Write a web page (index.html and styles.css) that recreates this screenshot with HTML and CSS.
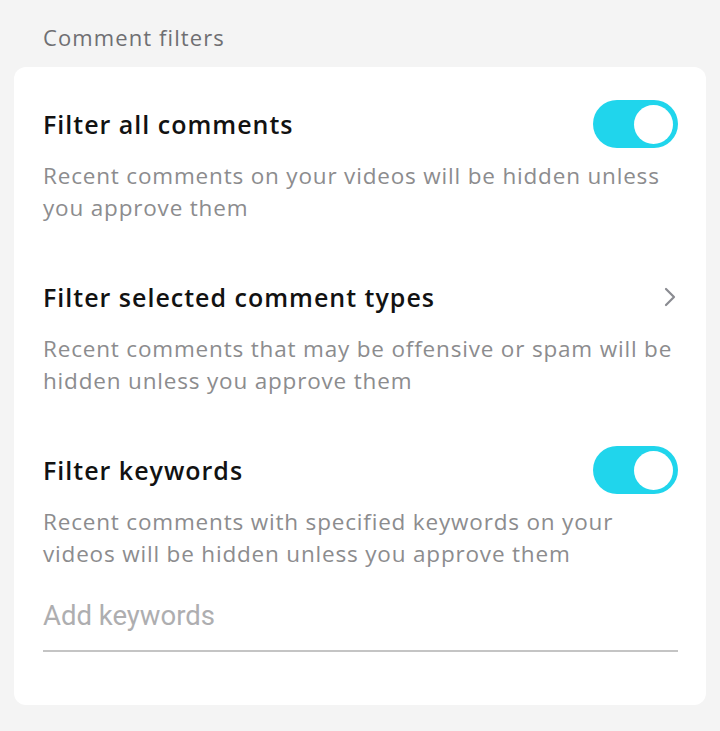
FILE: index.html
```html
<!DOCTYPE html>
<html lang="en">
<head>
  <meta charset="UTF-8" />
  <meta name="viewport" content="width=device-width, initial-scale=1.0"/>
  <title>Comment filters</title>
  <link rel="stylesheet" href="styles.css">
</head>
<body>

<div class="page">
  <h2 class="section-title">Comment filters</h2>

  <div class="card">
    <!-- Filter all comments -->
    <div class="item">
      <div class="item-row">
        <span class="item-title">Filter all comments</span>
        <span class="toggle on"><span class="knob"></span></span>
      </div>
      <p class="item-desc">Recent comments on your videos will be hidden unless you approve them</p>
    </div>

    <!-- Filter selected comment types -->
    <div class="item">
      <div class="item-row">
        <span class="item-title">Filter selected comment types</span>
        <svg class="chevron" viewBox="0 0 14 20" width="14" height="20">
          <path d="M3 2 L11 10 L3 18" fill="none" stroke="#8a8b91" stroke-width="2.2" stroke-linecap="round" stroke-linejoin="round"/>
        </svg>
      </div>
      <p class="item-desc">Recent comments that may be offensive or spam will be hidden unless you approve them</p>
    </div>

    <!-- Filter keywords -->
    <div class="item">
      <div class="item-row">
        <span class="item-title">Filter keywords</span>
        <span class="toggle on"><span class="knob"></span></span>
      </div>
      <p class="item-desc">Recent comments with specified keywords on your videos will be hidden unless you approve them</p>
      <input class="keyword-input" type="text" placeholder="Add keywords" />
    </div>
  </div>
</div>

</body>
</html>
```

FILE: styles.css
```css
* { margin: 0; padding: 0; box-sizing: border-box; }

html, body {
  height: 100%;
  background: #f4f4f4;
  font-family: 'Open Sans', 'Liberation Sans', sans-serif;
}

.page {
  padding: 21px 14px 0 14px;
}

.section-title {
  font-size: 22px;
  font-weight: 400;
  color: #6f6f72;
  line-height: 32px;
  letter-spacing: 1.1px;
  padding-left: 29px;
  margin-bottom: 14px;
}

.card {
  background: #fff;
  border-radius: 12px;
  padding: 33px 28px 53px 29px;
  display: flex;
  flex-direction: column;
  gap: 49px;
}

.item-row {
  display: flex;
  align-items: center;
  justify-content: space-between;
  height: 48px;
}

.item-title {
  font-size: 25px;
  font-weight: 600;
  letter-spacing: 1px;
  color: #121212;
}

.item-desc {
  margin-top: 12px;
  font-size: 22.5px;
  line-height: 32px;
  letter-spacing: 0.82px;
  color: #8c8c8e;
}

.toggle {
  width: 85px;
  height: 48px;
  border-radius: 24px;
  background: #20d5ec;
  display: flex;
  align-items: center;
  padding: 0 5px;
}

.toggle.on { justify-content: flex-end; }

.knob {
  width: 39px;
  height: 39px;
  border-radius: 50%;
  background: #fff;
}

.chevron { margin-right: 1px; }

.keyword-input {
  display: block;
  width: 100%;
  margin-top: 29px;
  border: none;
  border-bottom: 2px solid #c4c4c4;
  outline: none;
  font-family: 'Roboto', sans-serif;
  font-size: 27.5px;
  line-height: 32px;
  height: 53px;
  padding-bottom: 19px;
  background: transparent;
}

.keyword-input::placeholder { color: #aeaeb0; }
```
